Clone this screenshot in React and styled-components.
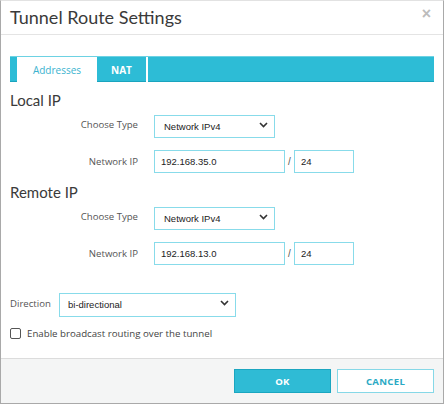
import React, { useState } from 'react';
import styled, { createGlobalStyle } from 'styled-components';

const GlobalStyle = createGlobalStyle`
	html, body {
		margin: 0;
		padding: 0;
		background: #fff;
	}
	* {
		box-sizing: border-box;
	}
`;

const Dialog = styled.div`
	width: 444px;
	height: 404px;
	display: flex;
	flex-direction: column;
	border: 1px solid #a9a9a9;
	border-top-color: #e2e2e2;
	background: #fff;
	font-family: 'Open Sans', 'Liberation Sans', sans-serif;
	color: #444;
`;

const Header = styled.div`
	height: 34px;
	display: flex;
	align-items: center;
	justify-content: space-between;
	padding: 0 12px 2px 9px;
	border-bottom: 1px solid #e4e4e4;
`;

const Title = styled.h1`
	margin: 0;
	font-family: Lato, 'Open Sans', sans-serif;
	font-weight: 400;
	font-size: 18px;
	color: #3a3a3a;
`;

const Close = styled.button`
	border: none;
	background: none;
	padding: 0;
	margin-top: -6px;
	font-family: 'Liberation Sans', sans-serif;
	font-size: 16px;
	font-weight: 700;
	color: #bcbcbc;
	line-height: 1;
`;

const Body = styled.div`
	padding: 21px 9px 0 9px;
`;

const TabBar = styled.div`
	height: 26px;
	display: flex;
	padding-left: 7px;
	background: #2dbcd6;
	border-top: 1px solid #6dd2e3;
	border-bottom: 1px solid #1aa4be;
`;

const Tab = styled.div`
	width: ${(p) => p.$width}px;
	display: flex;
	align-items: center;
	justify-content: center;
	font-size: 10px;
	margin-bottom: -1px;
	background: ${(p) => (p.$active ? '#fff' : 'transparent')};
	color: ${(p) => (p.$active ? '#3cb3cf' : '#fff')};
	font-weight: ${(p) => (p.$active ? 400 : 700)};
	border-right: ${(p) => (p.$active ? 'none' : '2px solid #fff')};
`;

const SectionTitle = styled.h2`
	margin: ${(p) => p.$top}px 0 0 0;
	font-family: Lato, 'Open Sans', sans-serif;
	font-weight: 400;
	font-size: 15px;
	line-height: 20px;
	color: #3a3a3a;
`;

const Row = styled.div`
	display: flex;
	align-items: center;
	margin-top: ${(p) => p.$top}px;
`;

const Label = styled.label`
	width: ${(p) => p.$width}px;
	text-align: ${(p) => p.$align || 'right'};
	font-size: 9.6px;
	color: #555;
	margin-right: ${(p) => p.$gap}px;
`;

const SelectWrap = styled.div`
	position: relative;
	width: ${(p) => p.$width}px;
	height: ${(p) => p.$height || 23}px;
`;

const Select = styled.select`
	appearance: none;
	width: 100%;
	height: 100%;
	border: 1px solid #88dbea;
	border-radius: 0;
	background: #fff;
	padding: 0 20px 0 ${(p) => p.$pad || 9}px;
	font-family: 'Liberation Sans', Arial, sans-serif;
	font-size: 9.5px;
	color: #222;
	outline: none;
`;

const Chevron = styled.svg`
	position: absolute;
	right: 7px;
	top: 50%;
	margin-top: -3px;
	pointer-events: none;
`;

const Input = styled.input`
	width: ${(p) => p.$width}px;
	height: 23px;
	border: 1px solid #88dbea;
	padding: 0 6px;
	font-family: 'Liberation Sans', Arial, sans-serif;
	font-size: 9.5px;
	color: #222;
	outline: none;
`;

const Slash = styled.span`
	width: 9px;
	text-align: center;
	font-family: 'Liberation Sans', Arial, sans-serif;
	font-size: 10px;
	color: #555;
`;

const CheckRow = styled.label`
	display: flex;
	align-items: center;
	gap: 6px;
	margin-top: 12px;
	font-size: 9.7px;
	color: #444;
`;

const CheckBox = styled.span`
	width: 11px;
	height: 11px;
	border: 1px solid #555;
	border-radius: 2px;
	background: ${(p) => (p.$checked ? '#2dbcd6' : '#fff')};
`;

const Footer = styled.div`
	margin-top: auto;
	height: 45px;
	display: flex;
	justify-content: flex-end;
	align-items: center;
	gap: 6px;
	padding: 0 9px 0 0;
	background: #f4f5f5;
	border-top: 1px solid #dcdcdc;
`;

const Button = styled.button`
	width: 97px;
	height: 24px;
	font-family: 'Open Sans', sans-serif;
	font-size: 9.6px;
	font-weight: 700;
	letter-spacing: 0.3px;
	border: 1px solid ${(p) => (p.$primary ? '#1ba6c0' : '#86d8e7')};
	background: ${(p) => (p.$primary ? '#2fbbd5' : '#fff')};
	color: ${(p) => (p.$primary ? '#fff' : '#2aa9c4')};
`;

const Arrow = () => (
	<Chevron width='9' height='6' viewBox='0 0 9 6'>
		<path d='M1 1 L4.5 4.5 L8 1' fill='none' stroke='#333' strokeWidth='1.6' />
	</Chevron>
);

const IpBlock = ({ title, top, ip }) => (
	<>
		<SectionTitle $top={top}>{title}</SectionTitle>
		<Row $top={3}>
			<Label $width={128} $gap={16}>Choose Type</Label>
			<SelectWrap $width={121}>
				<Select defaultValue='ipv4'>
					<option value='ipv4'>Network IPv4</option>
					<option value='host'>Host IPv4</option>
				</Select>
				<Arrow />
			</SelectWrap>
		</Row>
		<Row $top={14}>
			<Label $width={128} $gap={16}>Network IP</Label>
			<Input $width={131} defaultValue={ip} />
			<Slash>/</Slash>
			<Input $width={60} defaultValue='24' />
		</Row>
	</>
);

const App = () => {
	const [broadcast, setBroadcast] = useState(false);
	return (
		<>
			<GlobalStyle />
			<Dialog>
				<Header>
					<Title>Tunnel Route Settings</Title>
					<Close>×</Close>
				</Header>
				<Body>
					<TabBar>
						<Tab $active $width={80}>Addresses</Tab>
						<Tab $width={51}>NAT</Tab>
					</TabBar>
					<IpBlock title='Local IP' top={8} ip='192.168.35.0' />
					<IpBlock title='Remote IP' top={9} ip='192.168.13.0' />
					<Row $top={26}>
						<Label $width={40} $gap={9} $align='left'>Direction</Label>
						<SelectWrap $width={177} $height={24}>
							<Select defaultValue='bi' $pad={8}>
								<option value='bi'>bi-directional</option>
								<option value='in'>inbound</option>
								<option value='out'>outbound</option>
							</Select>
							<Arrow />
						</SelectWrap>
					</Row>
					<CheckRow onClick={() => setBroadcast(!broadcast)}>
						<CheckBox $checked={broadcast} />
						Enable broadcast routing over the tunnel
					</CheckRow>
				</Body>
				<Footer>
					<Button $primary>OK</Button>
					<Button>CANCEL</Button>
				</Footer>
			</Dialog>
		</>
	);
};

export default App;
